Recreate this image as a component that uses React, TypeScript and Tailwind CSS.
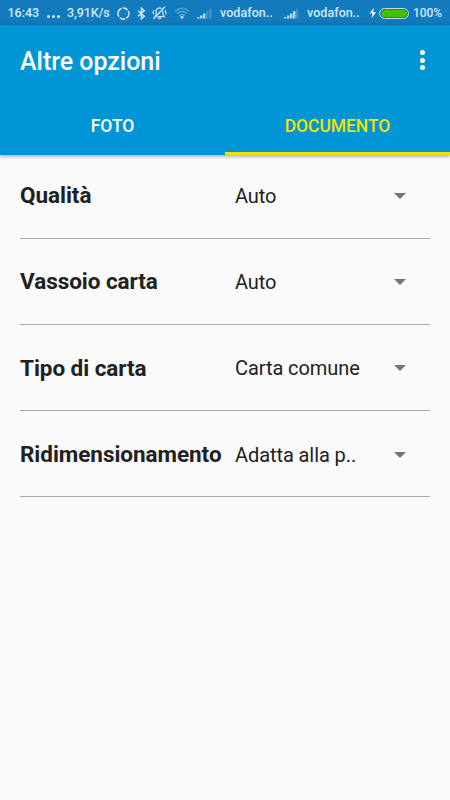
import React, { useState } from 'react';

interface PrintOption {
  label: string;
  value: string;
}

const TABS = ['FOTO', 'DOCUMENTO'];

const OPTIONS: PrintOption[] = [
  { label: 'Qualità', value: 'Auto' },
  { label: 'Vassoio carta', value: 'Auto' },
  { label: 'Tipo di carta', value: 'Carta comune' },
  { label: 'Ridimensionamento', value: 'Adatta alla p..' },
];

const SyncIcon: React.FC = () => (
  <svg className="ml-[7px] w-[13px] h-[13px] shrink-0" viewBox="0 0 13 13" fill="none" stroke="currentColor" strokeWidth="1.5">
    <path d="M4.6 1.2A5.5 5.5 0 0 0 2.1 9.8" />
    <path d="M3 10.7A5.5 5.5 0 0 0 8.3 11.7" />
    <path d="M9.3 11.2A5.5 5.5 0 0 0 11.3 3.9" />
    <path d="M10.6 3A5.5 5.5 0 0 0 5.8 1" />
  </svg>
);

const BluetoothIcon: React.FC = () => (
  <svg className="ml-[7px] w-[9px] h-[13px] shrink-0" viewBox="0 0 9 13" fill="none" stroke="currentColor" strokeWidth="1.4">
    <path d="M1 3.7L7.3 9.2L4.4 11.8V1.2L7.3 3.8L1 9.3" />
  </svg>
);

const MutedBellIcon: React.FC = () => (
  <svg className="ml-[6px] w-[15px] h-[14px] shrink-0" viewBox="0 0 15 14" fill="none" stroke="currentColor" strokeWidth="1.2">
    <path d="M5.5 10.6H12.2L10.9 8.9V4.8M9.6 2.5Q7.5 1.3 5.4 2.5Q4.1 3.6 4.1 5.4V8.9L2.8 10.6" />
    <path d="M6.2 11.6Q7.5 13.8 8.8 11.6" />
    <path d="M2 4.2Q.6 6.2 1.6 8.2M13.2 4.4Q14.5 6.4 13.4 8.4" />
    <path d="M13 .8L1.5 12.7" strokeWidth="1.4" />
  </svg>
);

const WifiIcon: React.FC = () => (
  <svg className="ml-[7px] w-[16px] h-[12px] shrink-0" viewBox="0 0 16 12" fill="none" stroke="currentColor" strokeWidth="1.5">
    <path d="M1 4.2Q8-1.8 15 4.2" opacity=".32" />
    <path d="M3.1 6.5Q8 2.3 12.9 6.5" opacity=".35" />
    <path d="M5.3 8.6Q8 6.4 10.7 8.6" opacity=".45" />
    <circle cx="8" cy="10.3" r="1.4" fill="currentColor" stroke="none" />
  </svg>
);

const SignalIcon: React.FC<{ level: number }> = ({ level }) => (
  <svg className="w-[15px] h-[11px] shrink-0" viewBox="0 0 15 11" fill="currentColor">
    {[1.5, 3, 5, 7.5, 10].map((height, i) => (
      <rect key={height} x={0.1 + i * 3} y={10.5 - height} width="2.3" height={height} opacity={i < level ? 0.9 : 0.22} />
    ))}
  </svg>
);

const StatusBar: React.FC = () => (
  <div className="h-[25px] pt-px bg-[#127bbd] text-[#d5e8f5] flex items-center text-[12.5px] font-medium leading-none whitespace-nowrap">
    <span className="ml-[7.5px] mt-px w-[33px]">16:43</span>
    <span className="ml-[6.5px] mt-[6px] w-[13px] flex justify-between shrink-0">
      <i className="size-[3px] rounded-full bg-current" />
      <i className="size-[3px] rounded-full bg-current" />
      <i className="size-[3px] rounded-full bg-current" />
    </span>
    <span className="ml-[7px] mt-px w-[43px] tracking-[-0.1px]">3,91K/s</span>
    <SyncIcon />
    <BluetoothIcon />
    <MutedBellIcon />
    <WifiIcon />
    <span className="ml-[7px] flex"><SignalIcon level={3} /></span>
    <span className="ml-[8px] mt-px w-[52px] tracking-[0.05px]">vodafon..</span>
    <span className="ml-[12px] flex"><SignalIcon level={4} /></span>
    <span className="ml-[8px] mt-px w-[52px] tracking-[0.05px]">vodafon..</span>
    <svg className="ml-[10px] w-[8px] h-[12px] shrink-0" viewBox="0 0 8 12" fill="currentColor">
      <path d="M4.8.5L.5 6.6H3.2L2.6 11.5L7.3 5H4.3Z" />
    </svg>
    <span className="ml-[2px] w-[30px] h-[11px] shrink-0 rounded-full border border-[#c5dcec] p-px">
      <span className="block size-full rounded-full bg-[#45bd00]" />
    </span>
    <span className="ml-[4px] text-[12px] tracking-[-0.1px]">100%</span>
  </div>
);

const OptionRow: React.FC<{ option: PrintOption }> = ({ option }) => (
  <div className="h-[86.2px] pt-[2px] mx-5 flex items-center border-b border-[#aaaaaa] text-[#212121] whitespace-nowrap">
    <span className="w-[215px] text-[22.5px] font-bold tracking-[-0.05px]">{option.label}</span>
    <span className="w-[159px] text-[20px] tracking-[-0.08px]">{option.value}</span>
    <svg className="w-[12px] h-[6px]" viewBox="0 0 12 6" fill="#757575">
      <path d="M0 0H12L6 6Z" />
    </svg>
  </div>
);

const App: React.FC = () => {
  const [activeTab, setActiveTab] = useState('DOCUMENTO');

  return (
    <div className="w-full h-screen overflow-hidden bg-[#fafafa] font-[Roboto,sans-serif]">
      <StatusBar />

      {/* App bar and tabs */}
      <header className="relative h-[130px] bg-[#0096d6] text-white shadow-[0_1px_4px_rgba(0,0,0,0.4)]">
        <div className="h-[70px] pl-5 pr-[25px] flex items-center justify-between">
          <h1 className="pt-[2px] text-[25px] leading-none font-medium tracking-[-0.03px]">Altre opzioni</h1>
          <button aria-label="Menu" className="flex flex-col gap-[2.5px]">
            <i className="size-[5px] rounded-full bg-white" />
            <i className="size-[5px] rounded-full bg-white" />
            <i className="size-[5px] rounded-full bg-white" />
          </button>
        </div>
        <nav className="h-[60px] grid grid-cols-2">
          {TABS.map((tab) => (
            <button
              key={tab}
              onClick={() => setActiveTab(tab)}
              className={`pt-[6px] text-[17.5px] font-medium tracking-[-0.08px] border-b-3 ${
                activeTab === tab ? 'text-[#f5e000] border-[#f5e000]' : 'border-transparent'
              }`}
            >
              {tab}
            </button>
          ))}
        </nav>
      </header>

      <main className="-mt-[2.5px]">
        {OPTIONS.map((option) => (
          <OptionRow key={option.label} option={option} />
        ))}
      </main>
    </div>
  );
};

export default App;
